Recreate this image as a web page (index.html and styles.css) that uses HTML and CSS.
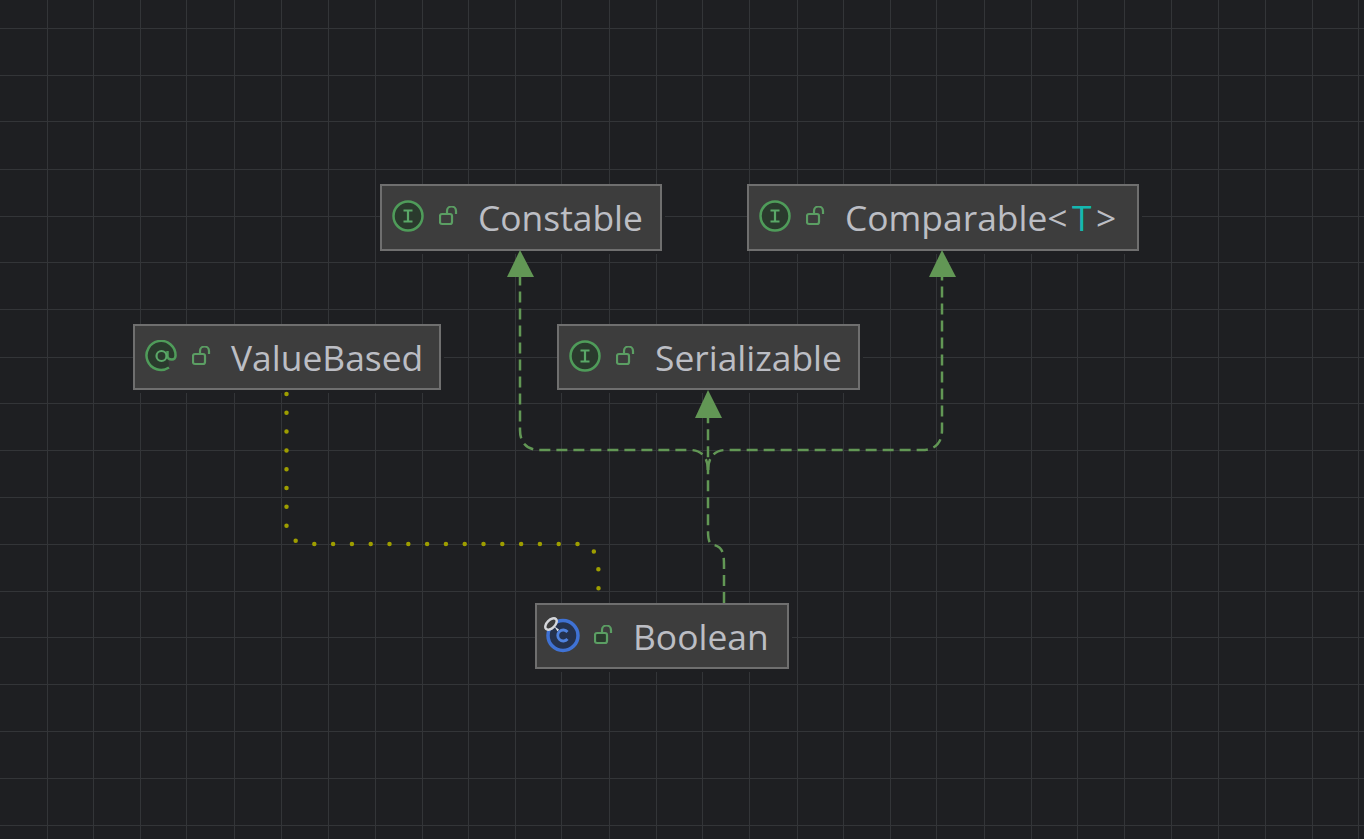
FILE: index.html
```html
<!DOCTYPE html>
<html lang="en">
<head>
<meta charset="utf-8">
<title>Boolean diagram</title>
<link rel="stylesheet" href="styles.css">
</head>
<body>
<main class="canvas">
  <svg class="layer grid" width="1364" height="839" shape-rendering="crispEdges">
    <path d="M47.5 0V839M93.5 0V839M140.5 0V839M186.5 0V839M234.5 0V839M281.5 0V839M328.5 0V839M375.5 0V839M422.5 0V839M468.5 0V839M515.5 0V839M561.5 0V839M609.5 0V839M656.5 0V839M702.5 0V839M749.5 0V839M797.5 0V839M843.5 0V839M890.5 0V839M936.5 0V839M984.5 0V839M1031.5 0V839M1077.5 0V839M1124.5 0V839M1171.5 0V839M1218.5 0V839M1265.5 0V839M1312.5 0V839M1358.5 0V839"/>
    <path d="M0 28.5H1364M0 75.5H1364M0 121.5H1364M0 169.5H1364M0 216.5H1364M0 262.5H1364M0 309.5H1364M0 357.5H1364M0 403.5H1364M0 450.5H1364M0 497.5H1364M0 544.5H1364M0 591.5H1364M0 637.5H1364M0 684.5H1364M0 731.5H1364M0 778.5H1364M0 825.5H1364"/>
  </svg>

  <div class="node n-constable">
    <svg class="kind" viewBox="0 0 32 32"><circle class="k-green" cx="16" cy="16" r="14.5"/><path class="k-glyph" d="M11.5 10.5h9M16 10.5v11M11.5 21.5h9"/></svg>
    <svg class="lock" viewBox="0 0 20 20"><rect class="l-body" x="1" y="8" width="12" height="10" rx="2"/><path class="l-arc" d="M8 8V5a4.200 4.200 0 0 1 9 0v3"/></svg>
    <span class="label">Constable</span>
  </div>
  <div class="node n-comparable">
    <svg class="kind" viewBox="0 0 32 32"><circle class="k-green" cx="16" cy="16" r="14.5"/><path class="k-glyph" d="M11.5 10.5h9M16 10.5v11M11.5 21.5h9"/></svg>
    <svg class="lock" viewBox="0 0 20 20"><rect class="l-body" x="1" y="8" width="12" height="10" rx="2"/><path class="l-arc" d="M8 8V5a4.200 4.200 0 0 1 9 0v3"/></svg>
    <span class="label">Comparable<span class="generic">&lt;<span class="tparam">T</span>&gt;</span></span>
  </div>
  <div class="node n-value">
    <svg class="kind" viewBox="0 0 32 32"><path class="k-green" d="M24 27.500A14.500 14.500 0 1 1 30.500 16c0 2-1.500 3.500-3.500 3.500-2.500 0-4.500-1-4.500-3.500V11"/><circle class="k-glyph" cx="16.500" cy="16" r="5"/></svg>
    <svg class="lock" viewBox="0 0 20 20"><rect class="l-body" x="1" y="8" width="12" height="10" rx="2"/><path class="l-arc" d="M8 8V5a4.200 4.200 0 0 1 9 0v3"/></svg>
    <span class="label">ValueBased</span>
  </div>
  <div class="node n-serial">
    <svg class="kind" viewBox="0 0 32 32"><circle class="k-green" cx="16" cy="16" r="14.5"/><path class="k-glyph" d="M11.5 10.5h9M16 10.5v11M11.5 21.5h9"/></svg>
    <svg class="lock" viewBox="0 0 20 20"><rect class="l-body" x="1" y="8" width="12" height="10" rx="2"/><path class="l-arc" d="M8 8V5a4.200 4.200 0 0 1 9 0v3"/></svg>
    <span class="label">Serializable</span>
  </div>
  <div class="node n-boolean">
    <svg class="kind kind-class" viewBox="0 0 36 36">
      <circle class="k-blue" cx="19" cy="18.500" r="15"/>
      <path class="k-blue-glyph" d="M23.500 15a5.500 5.500 0 1 0 0 7"/>
      <path class="k-tail" d="M10.500 9.500l4.500 3-1.500 2z"/>
      <ellipse class="k-final" cx="7" cy="7" rx="7" ry="4" transform="rotate(-45 7 7)"/>
    </svg>
    <svg class="lock" viewBox="0 0 20 20"><rect class="l-body l-dark" x="1" y="8" width="12" height="10" rx="2"/><path class="l-arc" d="M8 8V5a4.200 4.200 0 0 1 9 0v3"/></svg>
    <span class="label">Boolean</span>
  </div>

  <svg class="layer edges" width="1364" height="839">
    <path class="dash" d="M724 603V565C724 552 722 547 714 545C709 544 708 540 708 530V418"/>
    <path class="dash" d="M708 470C708 458 702 450 690 450H540C527 450 520 443 520 430V277"/>
    <path class="dash" d="M708 470C708 458 714 450 726 450H922C935 450 942 443 942 430V277"/>
    <path class="head" d="M520 250L534 277H507Z"/>
    <path class="head" d="M942 250L956 277H929Z"/>
    <path class="head" d="M708 390L722 418H695Z"/>
    <path class="dots" d="M286.500 394V525Q286.500 544 313 544H580Q598.500 544 598.500 574V592"/>
  </svg>
</main>
</body>
</html>
```
FILE: styles.css
```css
html, body {
  margin: 0;
  padding: 0;
  background: #1e1f22;
  overflow: hidden;
}

.canvas {
  position: relative;
  width: 1364px;
  height: 839px;
  overflow: hidden;
  background: #1e1f22;
  font-family: "Open Sans", "Noto Sans", sans-serif;
}

.layer {
  position: absolute;
  left: 0;
  top: 0;
  display: block;
}

.grid path {
  fill: none;
  stroke: #333538;
  stroke-width: 1;
}

.edges { pointer-events: none; }

.dash {
  fill: none;
  stroke: #629755;
  stroke-width: 2.500;
  stroke-dasharray: 11 6;
}

.head { fill: #629755; }

.dots {
  fill: none;
  stroke: #9e9e00;
  stroke-width: 4.500;
  stroke-linecap: round;
  stroke-dasharray: 0 18.800;
}

.node {
  position: absolute;
  box-sizing: border-box;
  height: 66px;
  display: flex;
  align-items: center;
  background: #3d3d3d;
  border: 2px solid #6f6f6f;
  box-shadow: 3px 3px 0 #1e1f22;
  color: #bcbec4;
  white-space: nowrap;
  padding-left: 10px;
}

.n-constable  { left: 380px; top: 184px; width: 282px; height: 67px; padding-bottom: 1px; }
.n-comparable { left: 747px; top: 184px; width: 392px; height: 67px; padding-bottom: 1px; }
.n-value      { left: 133px; top: 324px; width: 308px; }
.n-serial     { left: 557px; top: 324px; width: 303px; }
.n-boolean    { left: 535px; top: 603px; width: 254px; }

.kind {
  width: 32px;
  height: 32px;
  flex: none;
  margin-bottom: 2px;
}

.kind-class {
  width: 36px;
  height: 36px;
  margin-left: -3px;
  margin-right: -1px;
}

.lock {
  width: 20px;
  height: 20px;
  flex: none;
  margin-left: 15px;
  margin-top: -2px;
}

.label {
  margin-left: 19px;
  font-size: 35.400px;
  line-height: 46px;
}

.generic { letter-spacing: 4.500px; }

.tparam { color: #14b8b0; }

.k-green {
  fill: #2a3a2d;
  stroke: #4f9c5a;
  stroke-width: 2.500;
}

.k-glyph {
  fill: none;
  stroke: #5aa868;
  stroke-width: 2.200;
}

.k-blue {
  fill: #25324d;
  stroke: #3f72d4;
  stroke-width: 3.500;
}

.k-blue-glyph {
  fill: none;
  stroke: #4f82de;
  stroke-width: 2.800;
}

.k-tail {
  fill: #dfe1e5;
  stroke: none;
}

.k-final {
  fill: #3d3d3d;
  stroke: #d5d7db;
  stroke-width: 2.500;
}

.l-body,
.l-arc {
  fill: none;
  stroke: #5b9e63;
  stroke-width: 2.200;
}

.l-dark { fill: #2a3a2d; }
```
